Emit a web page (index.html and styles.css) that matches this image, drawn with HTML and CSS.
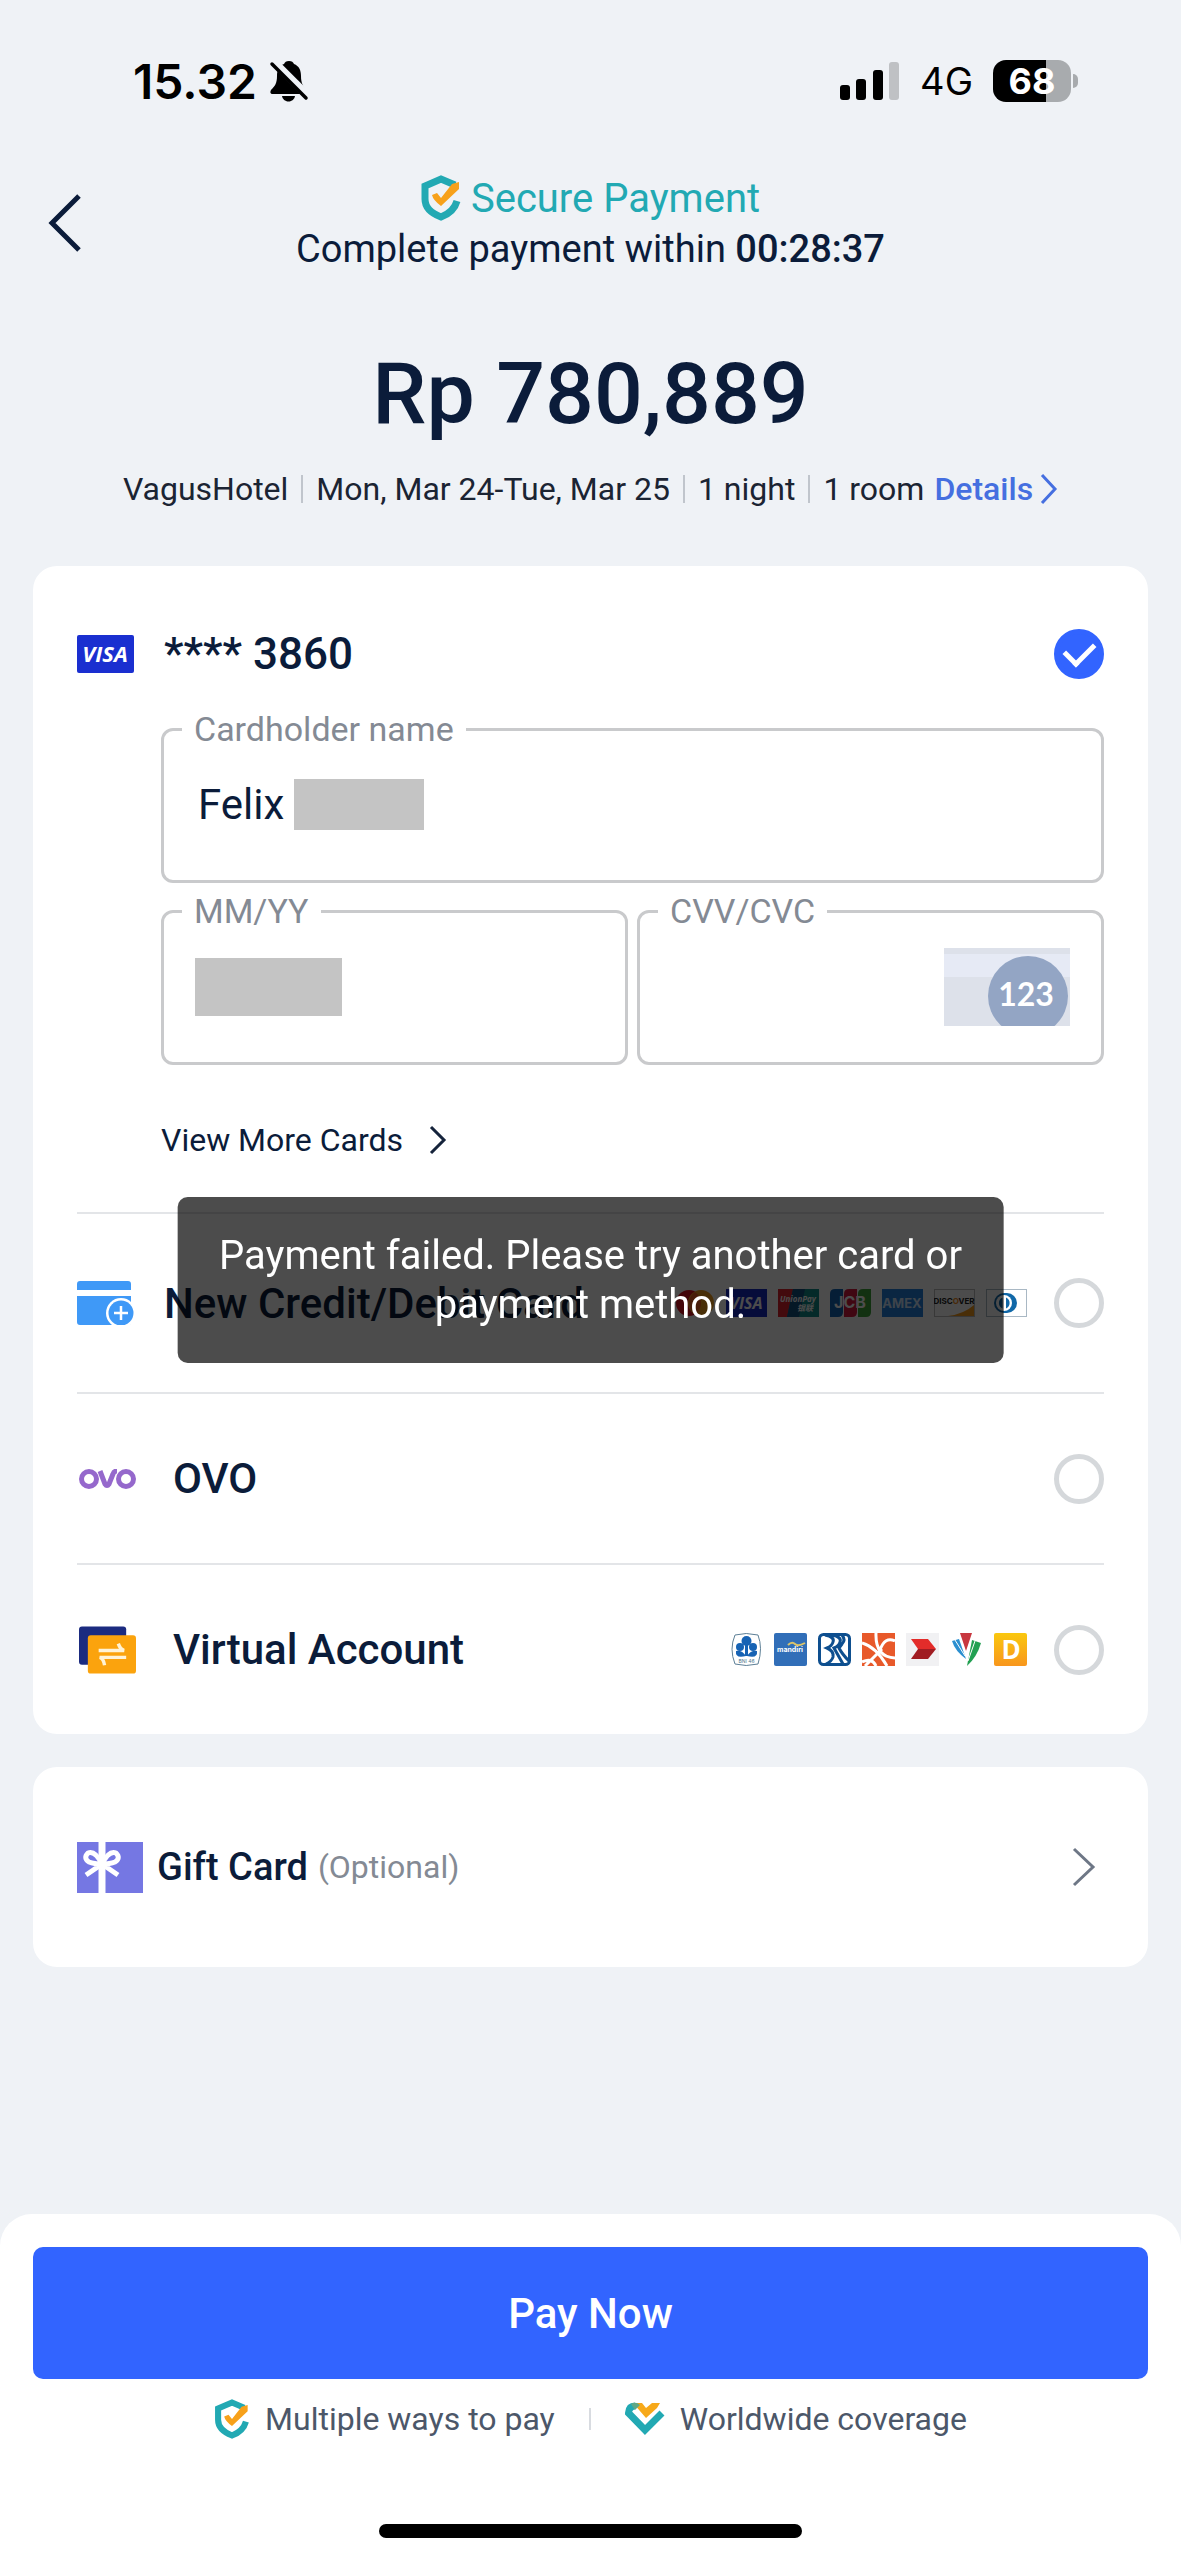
FILE: index.html
```html
<!DOCTYPE html>
<html lang="en">
<head>
<meta charset="utf-8">
<meta name="viewport" content="width=device-width, initial-scale=1">
<title>Secure Payment</title>
<link rel="stylesheet" href="styles.css">
</head>
<body>
<div class="page">
  <div class="status">
    <div class="status-side">
      <span class="clock">15.32</span>
      <svg class="bell" viewBox="0 0 40 42" width="40" height="42" aria-hidden="true">
        <path d="M20 1c3 0 4 1 5 3 5 2 7 6 7 12 0 7 2 10 5 14 1 2 0 4-2 4H4c-3 0-3-2-2-4 4-4 6-7 6-14 0-6 2-10 7-12 1-2 2-3 5-3z"/>
        <path d="M13 36h13c-.5 3-3 5.500-6.500 5.500S13.500 39 13 36z"/>
        <path d="M5 2l34 34" stroke="#eff2f6" stroke-width="8"/>
        <path d="M3 4l34 34" stroke="#000" stroke-width="3.500" stroke-linecap="round"/>
      </svg>
    </div>
    <div class="status-side">
      <svg viewBox="0 0 60 40" width="60" height="40" aria-hidden="true">
        <rect x="0" y="24" width="10" height="15" rx="3"/>
        <rect x="16" y="18" width="10" height="21" rx="3"/>
        <rect x="33" y="9" width="10" height="30" rx="3"/>
        <rect x="49" y="1" width="10" height="38" rx="3" fill="#bfc1c4"/>
      </svg>
      <span class="network">4G</span>
      <span class="battery"><span class="battery-body">68</span><span class="battery-tip"></span></span>
    </div>
  </div>

  <header class="top">
    <button class="back" type="button" aria-label="Back">
      <svg viewBox="0 0 34 60" width="34" height="60" aria-hidden="true"><path d="M31 3L4 30l27 27" fill="none" stroke="#0b1c3a" stroke-width="5"/></svg>
    </button>
    <div class="top-text">
      <div class="secure">
        <svg viewBox="0 0 40 46" width="40" height="46" aria-hidden="true">
          <path d="M34 10L20 4 4 11v13q0 12 16 18 13-5 16-16" fill="none" stroke="#22a9b3" stroke-width="7"/>
          <path d="M11 20l5-2 4 5L31 9l7-2v7L20 31q-8-6-9-11z" fill="#f7a11a"/>
        </svg>
        <span>Secure Payment</span>
      </div>
      <div class="deadline">Complete payment within <strong>00:28:37</strong></div>
    </div>
  </header>

  <h1 class="amount">Rp 780,889</h1>

  <div class="booking">
    <span>VagusHotel</span>
    <span class="sep"></span>
    <span>Mon, Mar 24-Tue, Mar 25</span>
    <span class="sep"></span>
    <span>1 night</span>
    <span class="sep"></span>
    <span>1 room</span>
    <a class="details" href="#details">Details
      <svg viewBox="0 0 18 32" width="18" height="32" aria-hidden="true"><path d="M2 2l13 14L2 30" fill="none" stroke="#456fe0" stroke-width="3"/></svg>
    </a>
  </div>

  <main class="content">
    <form class="card" id="pay">
      <label class="saved">
        <svg viewBox="0 0 57 38" width="57" height="38" aria-hidden="true">
          <rect width="57" height="38" rx="2" fill="#1a2fd0"/>
          <text x="28" y="27" class="visa-text">VISA</text>
        </svg>
        <span class="name name-saved">**** 3860</span>
        <input class="radio" type="radio" name="method" checked>
      </label>

      <div class="fields">
        <fieldset class="field field-wide">
          <legend><label for="holder">Cardholder name</label></legend>
          <input id="holder" class="text-input" type="text" value="Felix">
          <span class="mask mask-name"></span>
        </fieldset>
        <fieldset class="field">
          <legend><label for="expiry">MM/YY</label></legend>
          <span class="mask mask-date"></span>
          <input id="expiry" class="text-input fill" type="text">
        </fieldset>
        <fieldset class="field">
          <legend><label for="cvv">CVV/CVC</label></legend>
          <input id="cvv" class="text-input fill" type="text">
          <svg class="cvv-hint" viewBox="0 0 126 78" width="126" height="78" aria-hidden="true">
            <rect width="126" height="78" fill="#dde1ea"/>
            <rect y="6" width="126" height="23" fill="#e6eaf5"/>
            <circle cx="84" cy="48" r="40" fill="#93a5c4"/>
            <text x="82" y="58" class="cvv-text">123</text>
          </svg>
        </fieldset>
      </div>

      <button class="more" type="button">View More Cards
        <svg viewBox="0 0 18 30" width="18" height="30" aria-hidden="true"><path d="M2 2l13 13L2 28" fill="none" stroke="#15233b" stroke-width="3"/></svg>
      </button>

      <label class="method method-card">
        <svg viewBox="0 0 57 44" width="57" height="44" aria-hidden="true">
          <path d="M3 0h48q3 0 3 3v6H0V3q0-3 3-3zM0 15h54v26q0 3-3 3H3q-3 0-3-3z" fill="#3f99f7"/>
          <circle cx="44" cy="32" r="15" fill="#fff"/>
          <circle cx="44" cy="32" r="12.500" fill="#3f99f7"/>
          <path d="M37 32h14M44 25v14" stroke="#fff" stroke-width="2.500"/>
        </svg>
        <span class="name">New Credit/Debit Card</span>
        <span class="logos">
          <svg viewBox="0 0 41 28" width="41" height="28" aria-hidden="true"><circle cx="15" cy="14" r="13" fill="#e0131f"/><circle cx="27" cy="14" r="13" fill="#f59e1b"/><path d="M21 3a13 13 0 0 1 0 22 13 13 0 0 1 0-22z" fill="#f25f1e"/></svg>
          <svg viewBox="0 0 41 28" width="41" height="28" aria-hidden="true"><rect width="41" height="28" fill="#1728c4"/><text x="20" y="20" class="visa-mini">VISA</text></svg>
          <svg viewBox="0 0 41 28" width="41" height="28" aria-hidden="true"><rect width="41" height="28" fill="#0f8d8b"/><path d="M0 0h15L9 28H0z" fill="#e2232e"/><path d="M15 0h12l-6 28H9z" fill="#125080"/><text x="20" y="13" class="union-text">UnionPay</text><text x="27" y="22" class="union-text">银联</text></svg>
          <svg viewBox="0 0 41 28" width="41" height="28" aria-hidden="true"><path d="M5 0h8v23q0 5-5 5H0V5q0-5 5-5z" fill="#1165b4"/><path d="M19 0h8v23q0 5-5 5h-8V5q0-5 5-5z" fill="#d7193c"/><path d="M33 0h8v23q0 5-5 5h-8V5q0-5 5-5z" fill="#3ea33a"/><text x="20" y="19" class="jcb-text">JCB</text></svg>
          <svg viewBox="0 0 41 28" width="41" height="28" aria-hidden="true"><rect width="41" height="28" fill="#2380dc"/><text x="20" y="19" class="amex-text">AMEX</text></svg>
          <svg viewBox="0 0 41 28" width="41" height="28" aria-hidden="true"><rect x=".5" y=".5" width="40" height="27" fill="#fff" stroke="#bbb"/><path d="M14 27q16-2 26-11v11z" fill="#f59a1b"/><text x="20" y="15" class="disc-text">DISC<tspan fill="#f08a1b">O</tspan>VER</text></svg>
          <svg viewBox="0 0 41 28" width="41" height="28" aria-hidden="true"><rect x=".5" y=".5" width="40" height="27" fill="#fff" stroke="#a9b8c4"/><path d="M18 4h3a10 10 0 0 1 0 20h-3a10 10 0 0 1 0-20z" fill="#1168a8"/><circle cx="18" cy="14" r="8" fill="#fff"/><path d="M16.500 8.500a6 6 0 0 0 0 11zM20 8.500a6 6 0 0 1 0 11z" fill="#1168a8"/></svg>
        </span>
        <input class="radio" type="radio" name="method">
      </label>

      <label class="method method-wallet">
        <svg viewBox="0 0 57 20" width="57" height="20" aria-hidden="true">
          <g fill="none" stroke="#9568cc" stroke-width="5">
            <ellipse cx="10" cy="10" rx="7.500" ry="7.500"/><ellipse cx="47" cy="10" rx="7.500" ry="7.500"/>
            <path d="M21 2l5 13q2 3 4 0l4-10q1-3 4-3" stroke-linejoin="round"/>
          </g>
        </svg>
        <span class="name">OVO</span>
        <input class="radio" type="radio" name="method">
      </label>

      <label class="method method-wallet">
        <svg viewBox="0 0 58 48" width="57" height="48" aria-hidden="true">
          <rect width="48" height="39" rx="3" fill="#1b2b80"/>
          <rect x="9" y="9" width="49" height="39" rx="3" fill="#fba30d"/>
          <path d="M20 24.500h26q-4-1-6-7M48 31.500H21q4 1 5 8" fill="none" stroke="#fff3d6" stroke-width="3.500"/>
        </svg>
        <span class="name">Virtual Account</span>
        <span class="logos">
          <svg viewBox="0 0 33 33" width="33" height="33" aria-hidden="true"><path d="M5 2q11-3 23 0 5 13 0 29-12 3-23 0-6-15 0-29z" fill="#fff" stroke="#5d7f96"/><g fill="#1763b4"><circle cx="16.500" cy="8" r="5"/><circle cx="10" cy="14" r="4"/><circle cx="23" cy="14" r="4"/><path d="M16 23Q5 26 6 18q6-1 10 5zM17 23q11 3 10-5-6-1-10 5z"/><path d="M15 11h3v12h-3z"/></g><text x="16.500" y="30" class="bni-text">BNI 46</text></svg>
          <svg viewBox="0 0 33 33" width="33" height="33" aria-hidden="true"><rect width="33" height="33" rx="2" fill="#316eb8"/><path d="M14 12q4-4 7-1t10-1" fill="none" stroke="#dcc46a" stroke-width="2"/><text x="16" y="19" class="mandiri-text">mandiri</text></svg>
          <svg viewBox="0 0 33 33" width="33" height="33" aria-hidden="true"><rect x="1.500" y="1.500" width="30" height="30" rx="4" fill="#fff" stroke="#0e4f8f" stroke-width="3"/><path d="M7 2q10 2 8 7-1 4-6 6 7 3 6 9-1 4-7 7M14 2q10 2 8 7-1 4-6 6l9 16M24 2q4 5 0 9l-3 4q3 6 10 13" fill="none" stroke="#0e4f8f" stroke-width="3"/></svg>
          <svg viewBox="0 0 33 33" width="33" height="33" aria-hidden="true"><rect width="33" height="33" fill="#e8592a"/><path d="M0 10q14 4 25 23M3 33Q14 22 20 16M14 0q-1 24 19 25M33 8q-10-5-15 9M0 29q10-5 14 4" fill="none" stroke="#fff" stroke-width="3"/></svg>
          <svg viewBox="0 0 33 33" width="33" height="33" aria-hidden="true"><rect width="33" height="33" fill="#f1f1f3"/><path d="M5 6h17l8 10H12z" fill="#e32c2a"/><path d="M12 16h18l-8 10H5z" fill="#a01c22"/></svg>
          <svg viewBox="0 0 33 33" width="33" height="33" aria-hidden="true"><path d="M10 0h12l-6 18z" fill="#c8373f"/><path d="M2 8l7-2 7 20Q5 18 2 8z" fill="#2b8fd0"/><path d="M22 7l9 3q-4 14-14 23z" fill="#22a052"/><path d="M5 7l10 16M25 8l-7 20" stroke="#fff"/></svg>
          <svg viewBox="0 0 33 33" width="33" height="33" aria-hidden="true"><defs><linearGradient id="gold" x2="0" y2="1"><stop stop-color="#fac80e"/><stop offset="1" stop-color="#f8961d"/></linearGradient></defs><rect width="33" height="33" rx="2" fill="url(#gold)"/><text x="17" y="26" class="d-text">D</text></svg>
        </span>
        <input class="radio" type="radio" name="method">
      </label>
    </form>

    <button class="card gift" type="button">
      <svg viewBox="0 0 66 51" width="66" height="51" aria-hidden="true">
        <rect width="66" height="51" fill="#7577e3"/>
        <path d="M25 0v51" stroke="#fff" stroke-width="7"/>
        <path d="M25 22Q18 8 11 11q-5 5 1 9 5 2 13 2 8 0 13-2 6-4 1-9-7-3-14 11L9 33M25 22l16 11" fill="none" stroke="#fff" stroke-width="5"/>
      </svg>
      <span class="gift-name">Gift Card</span>
      <span class="gift-note">(Optional)</span>
      <svg class="gift-arrow" viewBox="0 0 25 40" width="25" height="40" aria-hidden="true"><path d="M3 2l19 18L3 38" fill="none" stroke="#6e7786" stroke-width="3"/></svg>
    </button>
  </main>

  <footer class="bottom">
    <button class="pay" type="submit" form="pay">Pay Now</button>
    <div class="perks">
      <svg viewBox="0 0 40 46" width="36" height="40" aria-hidden="true">
        <path d="M34 10L20 4 4 11v13q0 12 16 18 13-5 16-16" fill="none" stroke="#22a9b3" stroke-width="7"/>
        <path d="M11 20l5-2 4 5L31 9l7-2v7L20 31q-8-6-9-11z" fill="#f7a11a"/>
      </svg>
      <span>Multiple ways to pay</span>
      <span class="perk-sep"></span>
      <svg viewBox="0 0 40 34" width="40" height="34" aria-hidden="true">
        <path d="M10 4Q4 4 3.500 11L20 28 37 11" fill="none" stroke="#22a9b3" stroke-width="7"/>
        <path d="M8 1h9l4 5 6-5h8l-3 5-11 10z" fill="#f7a91a"/>
        <path d="M6 2q5-3 9 1l-5 5z" fill="#5fa887"/>
      </svg>
      <span class="perk-last">Worldwide coverage</span>
    </div>
    <div class="home-bar"></div>
  </footer>
</div>

<div class="toast" role="alert">Payment failed. Please try another card or payment method.</div>
</body>
</html>
```
FILE: styles.css
```css
* { box-sizing: border-box; }

body {
  margin: 0;
  background: #eff2f6;
  color: #0b1c3a;
  font-family: Roboto, "Liberation Sans", sans-serif;
  font-size: 32px;
}

button, input { font: inherit; color: inherit; }
button { border: 0; padding: 0; background: none; cursor: pointer; }
svg { display: block; flex: none; }

.page { min-height: 100vh; display: flex; flex-direction: column; }

/* Phone status bar */
.status {
  display: flex;
  justify-content: space-between;
  align-items: center;
  height: 162px;
  padding: 0 103px 0 133px;
  color: #000;
  font-family: Inter, sans-serif;
}
.status-side { display: flex; align-items: center; }
.clock { font-size: 48px; font-weight: 600; }
.bell { margin-left: 12px; }
.network { margin: 0 20px; font-size: 38px; }
.battery { display: flex; align-items: center; gap: 2px; }
.battery-body {
  width: 78px;
  height: 42px;
  border-radius: 13px;
  background: linear-gradient(90deg, #000 68%, #a8abae 68%);
  color: #fff;
  font-size: 36px;
  font-weight: 700;
  line-height: 42px;
  text-align: center;
}
.battery-tip { width: 5px; height: 14px; border-radius: 0 5px 5px 0; background: #a8abae; }

/* Header */
.top { display: flex; align-items: center; padding: 10px 48px 0; }
.back { width: 34px; height: 60px; }
.top-text { flex: 1; margin-right: 34px; text-align: center; }
.secure {
  display: flex;
  justify-content: center;
  align-items: center;
  gap: 10px;
  height: 52px;
  color: #22a9b3;
  font-size: 40px;
}
.deadline { font-size: 38px; line-height: 50px; }
.deadline strong { font-weight: 500; }

.amount { margin: 70px 0 0; font-size: 86px; font-weight: 500; line-height: 100px; text-align: center; }

.booking {
  display: flex;
  justify-content: center;
  align-items: center;
  margin: 25px 0 57px;
  height: 40px;
  color: #1b2433;
  white-space: nowrap;
}
.sep { width: 2px; height: 28px; margin: 0 13px; background: #c0c5cc; }
.details {
  display: flex;
  align-items: center;
  gap: 7px;
  margin-left: 10px;
  color: #456fe0;
  font-weight: 500;
  text-decoration: none;
}

/* Cards */
.content { display: flex; flex-direction: column; gap: 33px; padding: 0 33px; }
.card { border-radius: 24px; background: #fff; padding: 0 44px; }

.saved { display: flex; align-items: center; gap: 30px; height: 141px; padding-top: 34px; }
.name { font-size: 42px; font-weight: 500; white-space: nowrap; }
.name-saved { font-size: 44px; }
.visa-text { fill: #fff; font: italic 700 22px "Open Sans", sans-serif; text-anchor: middle; }

.radio {
  appearance: none;
  flex: none;
  display: grid;
  place-items: center;
  width: 50px;
  height: 50px;
  margin: 0 0 0 auto;
  border: 5px solid #d5d8db;
  border-radius: 50%;
  background: #fff;
}
.radio:checked { border-color: #3264ff; background: #3264ff; }
.radio:checked::after {
  content: "";
  width: 24px;
  height: 14px;
  border: solid #fff;
  border-width: 0 0 5px 5px;
  transform: translateY(-3px) rotate(-45deg);
}

.fields { display: grid; grid-template-columns: 1fr 1fr; gap: 6px 9px; margin-left: 84px; }
.field {
  display: flex;
  align-items: center;
  min-width: 0;
  height: 176px;
  margin: 0;
  padding: 0 34px 22px;
  border: 3px solid #c9cacc;
  border-radius: 12px;
}
.field-wide { grid-column: 1 / -1; }
.field legend {
  margin-left: -16px;
  padding: 0 12px;
  color: #848a94;
  font-size: 34px;
  line-height: 44px;
}
.field:not(.field-wide) { padding: 0 31px 22px; }
.field:not(.field-wide) legend { margin-left: -13px; }
.text-input { width: 96px; height: 60px; padding: 0; border: 0; outline: 0; background: none; font-size: 42px; }
.fill { flex: 1; min-width: 0; }
.mask { flex: none; background: #c4c4c4; }
.mask-name { width: 130px; height: 51px; }
.mask-date { width: 147px; height: 58px; }
.cvv-text { fill: #fff; font: 700 32px Lato, sans-serif; text-anchor: middle; }

.more { display: flex; align-items: center; gap: 26px; height: 48px; margin: 51px 0 48px 84px; }

.method { display: flex; align-items: center; border-top: 2px solid #e3e5e8; }
.method-card { height: 180px; gap: 30px; }
.method-wallet { height: 171px; gap: 37px; padding-left: 2px; }
.logos { display: flex; gap: 11px; margin-left: auto; }
.logos + .radio { margin-left: 0; }
.method-card .logos + .radio { margin-left: -3px; }
.method-wallet .logos + .radio { margin-left: -10px; }

.visa-mini { fill: #fff; font: italic 700 16px "Open Sans", sans-serif; text-anchor: middle; }
.union-text { fill: #fff; font: italic 700 8px "Open Sans", "Noto Sans CJK SC", sans-serif; text-anchor: middle; }
.jcb-text { fill: #fff; font: 700 16px Inter, sans-serif; text-anchor: middle; }
.amex-text { fill: #cfe4fb; font: 700 13px Inter, sans-serif; text-anchor: middle; }
.disc-text { fill: #222; font: 700 8px Inter, sans-serif; text-anchor: middle; }
.bni-text { fill: #4d738c; font: 5px Inter, sans-serif; text-anchor: middle; }
.mandiri-text { fill: #fff; font: 700 7px Inter, sans-serif; text-anchor: middle; }
.d-text { fill: #fff; font: 700 26px "Open Sans", sans-serif; text-anchor: middle; }

.gift { display: flex; align-items: center; height: 200px; text-align: left; }
.gift-name { margin-left: 14px; font-size: 38px; font-weight: 500; }
.gift-note { margin-left: 10px; color: #848a94; }
.gift-arrow { margin-left: auto; margin-right: 8px; }

/* Pay bar */
.bottom { margin-top: auto; padding: 33px 33px 22px; border-radius: 32px 32px 0 0; background: #fff; }
.pay {
  display: block;
  width: 100%;
  height: 132px;
  border-radius: 10px;
  background: #3264ff;
  color: #fff;
  font-size: 42px;
  font-weight: 500;
}
.perks {
  display: flex;
  justify-content: center;
  align-items: center;
  gap: 15px;
  height: 80px;
  color: #4c5769;
}
.perk-sep { width: 2px; height: 22px; margin: 0 19px; background: #d8dbe0; }
.home-bar { width: 38%; height: 14px; margin: 65px auto 0; border-radius: 7px; background: #000; }

/* Error message over the page */
.toast {
  position: fixed;
  top: 50%;
  left: 50%;
  width: 70%;
  padding: 34px 24px;
  border-radius: 10px;
  background: rgba(0, 0, 0, .7);
  color: #fff;
  font-size: 40px;
  line-height: 49px;
  text-align: center;
  transform: translate(-50%, -50%);
}
```
